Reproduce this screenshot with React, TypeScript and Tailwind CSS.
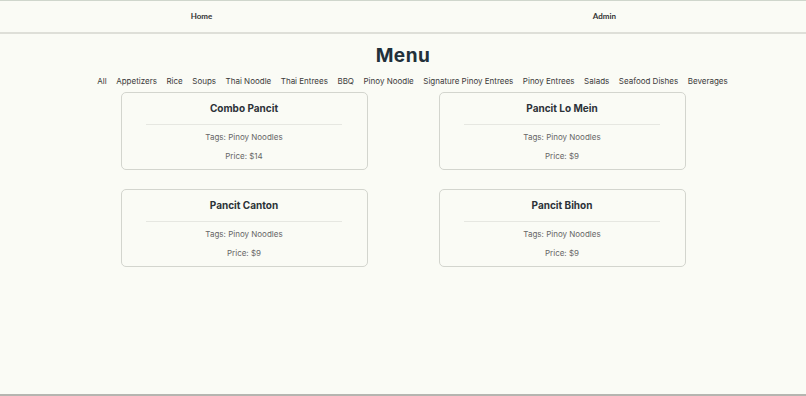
const categories = [
  "All",
  "Appetizers",
  "Rice",
  "Soups",
  "Thai Noodle",
  "Thai Entrees",
  "BBQ",
  "Pinoy Noodle",
  "Signature Pinoy Entrees",
  "Pinoy Entrees",
  "Salads",
  "Seafood Dishes",
  "Beverages",
];

const items = [
  { name: "Combo Pancit", tags: "Pinoy Noodles", price: 14 },
  { name: "Pancit Lo Mein", tags: "Pinoy Noodles", price: 9 },
  { name: "Pancit Canton", tags: "Pinoy Noodles", price: 9 },
  { name: "Pancit Bihon", tags: "Pinoy Noodles", price: 9 },
];

export default function App() {
  return (
    <div className="min-h-[396px] bg-[#fafbf5] border-b-2 border-[#b5b5b0] font-['Inter',sans-serif]">
      <nav className="h-[34px] border-t border-[#cfd6cc] border-b-2 border-b-[#dedfd8] flex items-center">
        <a className="flex-1 text-center text-[8px] font-bold text-[#333] font-['Lato',sans-serif] -mt-[2px]">Home</a>
        <a className="flex-1 text-center text-[8px] font-bold text-[#333] font-['Lato',sans-serif] -mt-[2px]">Admin</a>
      </nav>

      <h1 className="mt-[8px] text-center text-[19px] font-bold text-[#22303a] tracking-[0.5px]">Menu</h1>

      <div className="mt-[4px] pl-[19px] flex justify-center gap-[9.5px] text-[8px] text-[#3a3a3a]">
        {categories.map((c) => (
          <span key={c}>{c}</span>
        ))}
      </div>

      <div className="mx-auto mt-[5px] w-[636px] grid grid-cols-2 gap-y-[19px] justify-items-center">
        {items.map((item) => (
          <div
            key={item.name}
            className="w-[247px] h-[78px] rounded-[5px] border border-[#d3d5ce] flex flex-col items-center pt-[8px]"
          >
            <h2 className="text-[10px] font-bold text-[#2c3238]">{item.name}</h2>
            <div className="mt-[8px] w-4/5 border-t border-[#e6e7e1]" />
            <p className="mt-[6px] text-[8px] text-[#666]">Tags: {item.tags}</p>
            <p className="mt-[7px] text-[8px] text-[#666]">Price: ${item.price}</p>
          </div>
        ))}
      </div>
    </div>
  );
}
